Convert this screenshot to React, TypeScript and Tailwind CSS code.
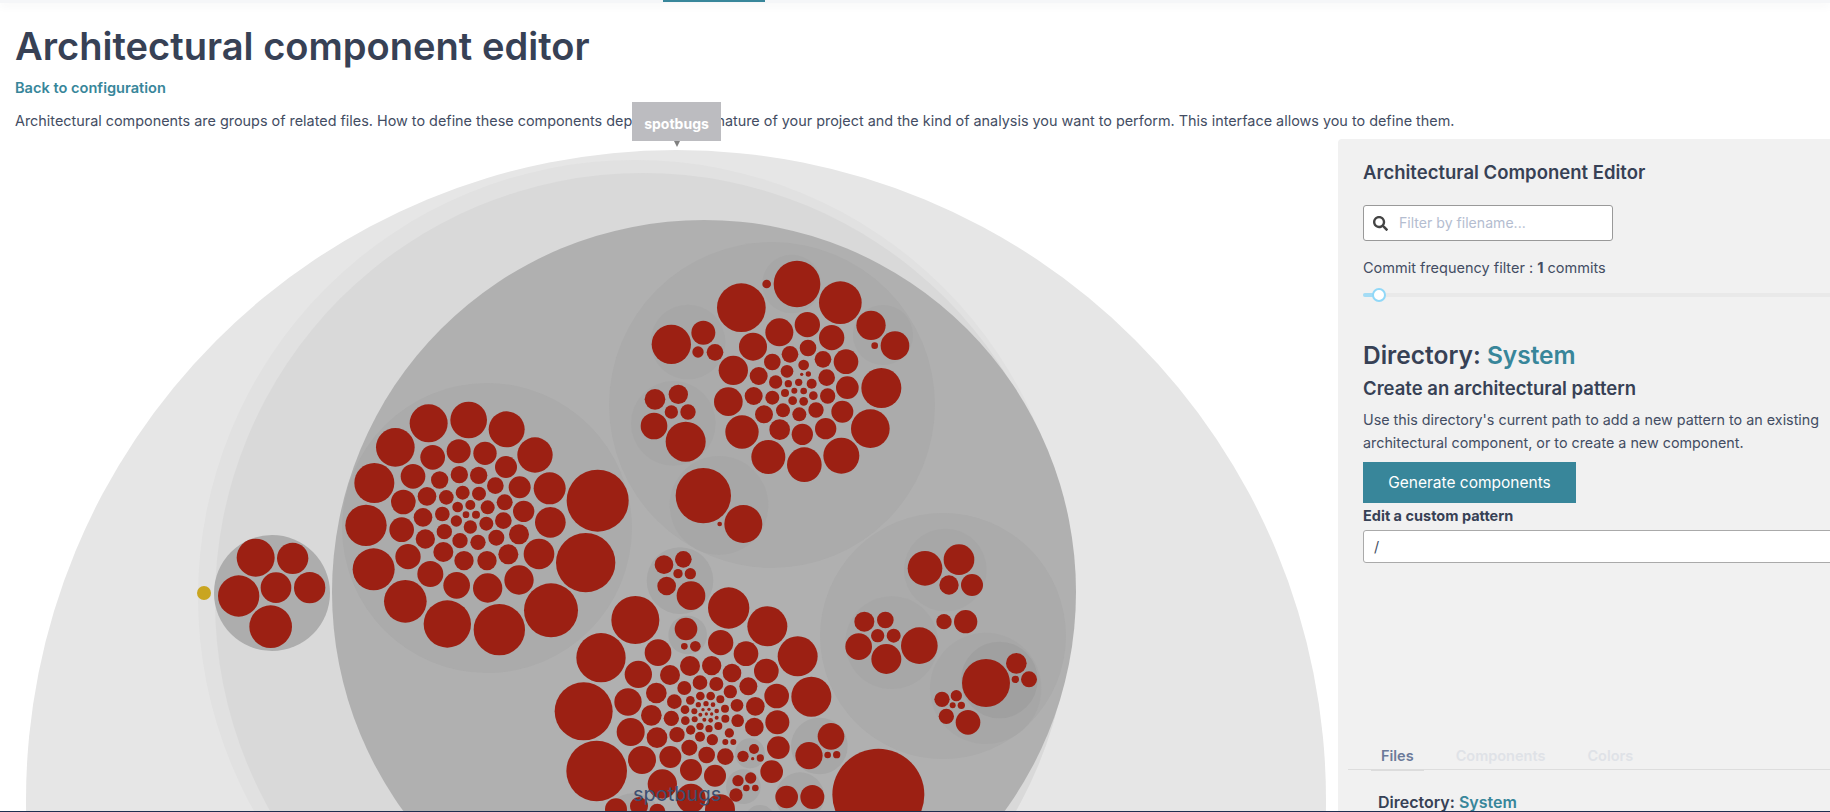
import { FaSearch } from 'react-icons/fa';

type Circle = [number, number, number];

// Circles were read off 3x crops of the layout, so each group keeps the crop origin
const fromCrop = (ox: number, oy: number, list: Circle[]): Circle[] =>
  list.map(([x, y, r]) => [ox + x / 3, oy + y / 3, r / 3]);

const shells: { c: Circle; fill: string }[] = [
  { c: [676, 800, 650], fill: '#e6e6e6' },
  { c: [635, 597, 437], fill: '#e1e1e1' },
  { c: [643, 601, 428], fill: '#d9d9d9' },
  { c: [704, 592, 372], fill: '#b0b0b0' },
];

const groups: { c: Circle; fill: string }[] = [
  { c: [772, 405, 163], fill: '#ababab' },
  { c: [487, 528, 145], fill: '#ababab' },
  { c: [943, 636, 123], fill: '#ababab' },
  { c: [272, 593, 58], fill: '#adadad' },
];

const pockets: Circle[] = [
  ...fromCrop(600, 220, [
    [264, 366, 112],
    [220, 610, 127],
    [357, 856, 148],
    [575, 192, 88],
    [849, 345, 90],
  ]),
  ...fromCrop(530, 540, [
    [450, 122, 100],
    [473, 285, 58],
    [660, 640, 45],
    [868, 618, 85],
    [640, 740, 52],
    [810, 770, 73],
    [310, 850, 90],
    [690, 840, 45],
  ]),
  ...fromCrop(800, 500, [
    [436, 210, 124],
    [275, 428, 139],
    [557, 565, 167],
  ]),
];

const innerPockets: Circle[] = fromCrop(800, 500, [[598, 540, 115]]);

const leaves: Circle[] = [
  ...fromCrop(600, 220, [
    [591, 192, 70], [500, 192, 13], [424, 263, 73], [721, 248, 64], [813, 316, 44], [885, 377, 43], [824, 377, 10],
    [622, 314, 38], [538, 337, 42], [695, 353, 38], [459, 380, 42], [624, 384, 25], [570, 403, 25], [517, 426, 25],
    [669, 418, 25], [738, 425, 37], [400, 451, 44], [611, 435, 16], [561, 454, 19], [476, 468, 27], [605, 463, 5],
    [625, 462, 8], [680, 473, 25], [742, 503, 34], [844, 504, 60], [527, 486, 20], [565, 491, 11], [596, 487, 11],
    [635, 491, 15], [385, 545, 43], [461, 528, 27], [583, 512, 9], [611, 513, 10], [555, 519, 12], [640, 527, 13],
    [683, 528, 23], [517, 533, 21], [578, 542, 13], [611, 544, 13], [492, 583, 27], [549, 571, 21], [598, 583, 21],
    [648, 570, 23], [727, 575, 33], [426, 636, 50], [539, 629, 31], [607, 643, 32], [677, 626, 32], [811, 626, 58],
    [505, 711, 51], [613, 734, 52], [724, 707, 54], [310, 338, 36], [214, 373, 59], [294, 396, 17], [345, 397, 25],
    [235, 523, 29], [165, 538, 31], [214, 576, 20], [264, 576, 23], [162, 618, 40], [257, 665, 60], [310, 827, 83],
    [430, 912, 57], [359, 912, 7],
  ]),
  ...fromCrop(180, 380, [
    [227, 533, 57], [338, 535, 47], [176, 648, 62], [288, 623, 46], [389, 623, 47], [272, 740, 64],
    [746, 130, 57], [866, 120, 55], [980, 148, 54], [646, 202, 58], [758, 232, 37], [836, 214, 36], [915, 220, 35],
    [1065, 225, 53], [978, 261, 33], [583, 309, 60], [699, 289, 37], [779, 300, 26], [838, 284, 26], [896, 286, 26],
    [946, 317, 25], [1019, 322, 33], [1109, 325, 48], [1253, 362, 93], [670, 366, 37], [741, 349, 28], [799, 352, 22],
    [848, 338, 21], [897, 341, 21], [974, 367, 24], [871, 375, 15], [833, 381, 16], [923, 382, 21], [1031, 394, 32],
    [558, 436, 62], [665, 449, 37], [729, 412, 28], [787, 402, 22], [858, 404, 10], [888, 404, 12], [829, 423, 17],
    [919, 431, 21], [970, 422, 25], [1111, 427, 46], [871, 441, 20], [793, 455, 23], [736, 477, 29], [1017, 463, 30],
    [949, 473, 24], [840, 482, 23], [894, 487, 23], [581, 568, 63], [684, 530, 38], [790, 516, 30], [985, 523, 30],
    [852, 542, 29], [921, 542, 29], [1077, 522, 46], [1217, 548, 89], [751, 582, 39], [830, 616, 40], [923, 624, 44],
    [1017, 600, 44], [676, 664, 64], [1113, 691, 81], [802, 732, 71], [958, 749, 77],
  ]),
  ...fromCrop(530, 540, [
    [402, 74, 28], [460, 58, 25], [444, 101, 14], [481, 101, 17], [410, 138, 28], [483, 167, 43], [468, 267, 34],
    [463, 319, 10], [496, 319, 16], [596, 204, 62], [712, 259, 60], [316, 240, 72], [572, 308, 38], [648, 341, 37],
    [803, 349, 60], [213, 353, 74], [384, 338, 40], [325, 403, 41], [480, 378, 30], [545, 377, 29], [606, 399, 28],
    [709, 393, 37], [420, 405, 30], [510, 428, 22], [559, 432, 21], [655, 439, 27], [844, 470, 60], [161, 514, 87],
    [379, 459, 31], [463, 444, 21], [601, 455, 20], [740, 468, 37], [294, 486, 41], [433, 485, 22], [511, 468, 13],
    [542, 468, 13], [571, 478, 12], [481, 481, 13], [505, 494, 8], [528, 491, 8], [549, 494, 7], [621, 496, 19],
    [676, 499, 28], [364, 526, 31], [465, 509, 13], [493, 514, 9], [519, 509, 5], [537, 508, 5], [560, 513, 7],
    [585, 506, 12], [424, 535, 23], [511, 524, 6], [529, 522, 5], [545, 522, 5], [560, 533, 6], [586, 536, 12],
    [623, 542, 19], [742, 547, 36], [673, 561, 28], [466, 542, 13], [494, 538, 9], [523, 539, 6], [542, 541, 7],
    [565, 558, 12], [510, 559, 11], [537, 566, 11], [302, 576, 42], [482, 570, 14], [381, 593, 31], [441, 584, 23],
    [598, 579, 14], [510, 590, 15], [547, 599, 17], [586, 606, 9], [610, 606, 9], [478, 623, 24], [530, 645, 25],
    [586, 650, 25], [745, 623, 34], [336, 660, 42], [421, 651, 33], [200, 693, 91], [483, 690, 33], [555, 707, 33],
    [725, 695, 34], [639, 649, 17], [672, 627, 15], [691, 654, 11], [668, 656, 5], [903, 589, 40], [837, 647, 41],
    [893, 645, 10], [920, 644, 11], [662, 714, 17], [624, 722, 17], [676, 744, 10], [649, 744, 10], [618, 765, 20],
    [770, 771, 34], [847, 771, 36], [1045, 764, 138], [397, 732, 44], [483, 775, 44], [570, 808, 45], [258, 808, 33],
    [327, 798, 27], [382, 815, 24],
  ]),
  ...fromCrop(800, 500, [
    [375, 205, 52], [477, 179, 46], [447, 255, 29], [516, 255, 33], [432, 365, 23], [497, 365, 35], [193, 365, 30],
    [256, 360, 25], [233, 407, 20], [281, 407, 21], [176, 440, 40], [259, 477, 45], [358, 437, 55], [426, 598, 23],
    [469, 587, 17], [458, 616, 9], [484, 616, 11], [439, 649, 23], [504, 667, 37], [558, 549, 72], [649, 490, 31],
    [687, 538, 24], [646, 538, 11],
  ]),
];

const Dots = ({ list, fill }: { list: Circle[]; fill: string }) => (
  <g fill={fill}>
    {list.map(([x, y, r], i) => (
      <circle key={i} cx={x} cy={y} r={r} />
    ))}
  </g>
);

const PackChart = () => (
  <svg className="block h-full w-full" viewBox="0 139 1338 673">
    {shells.map((s, i) => (
      <circle key={i} cx={s.c[0]} cy={s.c[1]} r={s.c[2]} fill={s.fill} />
    ))}
    {groups.map((s, i) => (
      <circle key={i} cx={s.c[0]} cy={s.c[1]} r={s.c[2]} fill={s.fill} />
    ))}
    <Dots list={pockets} fill="#a7a7a7" />
    <Dots list={innerPockets} fill="#a0a0a0" />
    <Dots list={leaves} fill="#9c2013" />
    <circle cx={204} cy={593} r={7} fill="#c9a520" />
  </svg>
);

const App = () => {
  return (
    <div className="relative h-screen overflow-hidden border-b border-[#1e2f50] bg-white font-['Inter',sans-serif] text-[#434d63]">
      <div className="relative h-[3px] bg-[#f5f6f8] shadow-[0_2px_10px_rgba(0,0,0,0.08)]">
        <div className="absolute left-[663px] top-0 h-[2px] w-[102px] bg-[#38869a]" />
      </div>

      <div className="px-[15px]">
        <h1 className="mt-[20px] text-[38.1px] font-semibold leading-[46px] text-[#374155]">Architectural component editor</h1>
        <a className="mt-[9px] block text-[14.6px] font-semibold leading-[20px] text-[#38869a]">Back to configuration</a>
        <p className="mt-[13px] text-[14.4px] leading-[20px]">
          Architectural components are groups of related files. How to define these components depends on the nature of your
          project and the kind of analysis you want to perform. This interface allows you to define them.
        </p>
      </div>

      <div className="mt-[8px] flex h-[673px]">
        <div className="relative w-[1338px] shrink-0">
          <PackChart />
          <div className="absolute left-[632px] top-[-37px] flex h-[39px] w-[89px] items-center justify-center bg-[#bcbcc0] pt-[3px] text-[14px] font-bold text-white">
            spotbugs
          </div>
          <div className="absolute left-[674px] top-[2px] h-0 w-0 border-x-[3px] border-t-[6px] border-x-transparent border-t-[#808080]" />
          <span className="absolute left-[633px] top-[643px] text-[20px] leading-[24px] text-[#3d4f70]">spotbugs</span>
        </div>

        <div className="w-[600px] shrink-0 rounded-tl bg-[#f1f1f1] pl-[25px] pt-[20px]">
          <h2 className="text-[18.5px] font-semibold leading-[26px] text-[#374155]">Architectural Component Editor</h2>

          <div className="mt-[20px] flex h-[36px] w-[250px] items-center rounded-[3px] border border-[#999] bg-white pl-[9px]">
            <FaSearch className="h-[15px] w-[15px] text-[#444]" />
            <span className="ml-[11px] text-[14.1px] text-[#b4bdd0]">Filter by filename...</span>
          </div>

          <p className="mt-[17px] text-[14.5px] leading-[20px]">
            Commit frequency filter : <b>1</b> commits
          </p>

          <div className="relative mt-[15px] h-[4px] w-[600px] rounded-full bg-[#e9e9e9]">
            <div className="h-full w-[12px] rounded-l-full bg-[#a4dcf5]" />
            <div className="absolute left-[9px] top-[-5px] h-[14px] w-[14px] rounded-full border-2 border-[#90d8f8] bg-white" />
          </div>

          <h2 className="mt-[42px] text-[24.5px] font-semibold leading-[32px] text-[#374155]">
            Directory: <span className="text-[#38869a]">System</span>
          </h2>
          <h3 className="mt-[4px] text-[18.5px] font-semibold leading-[26px] text-[#374155]">Create an architectural pattern</h3>
          <p className="mt-[7px] w-[465px] text-[14.33px] leading-[23px]">
            Use this directory's current path to add a new pattern to an existing architectural component, or to create a new
            component.
          </p>

          <button className="mt-[8px] block h-[41px] w-[213px] bg-[#38869a] text-center text-[15.5px] text-white">Generate components</button>
          <label className="mt-[3px] block text-[14.5px] font-bold leading-[20px] text-[#374155]">Edit a custom pattern</label>
          <div className="mt-[4px] flex h-[33px] w-[600px] items-center rounded-[3px] border border-[#aaa] bg-white pl-[10px] text-[14.4px]">/</div>

          <div className="-ml-[15px] mt-[173px] flex h-[34px] w-[600px] items-end gap-[22px] border-b border-[#ddd] pl-[23px] text-[14.5px] font-semibold">
            <span className="-mb-[2px] border-b-2 border-[#dcdcdc] px-[10px] pb-[2px] text-[#6b7a99]">Files</span>
            <span className="px-[10px] pb-[2px] text-[#dfe2e7]">Components</span>
            <span className="px-[10px] pb-[2px] text-[#dfe2e7]">Colors</span>
          </div>
          <h4 className="ml-[15px] mt-[21px] text-[16px] font-semibold leading-[22px] text-[#374155]">
            Directory: <span className="text-[#38869a]">System</span>
          </h4>
        </div>
      </div>
    </div>
  );
};

export default App;
